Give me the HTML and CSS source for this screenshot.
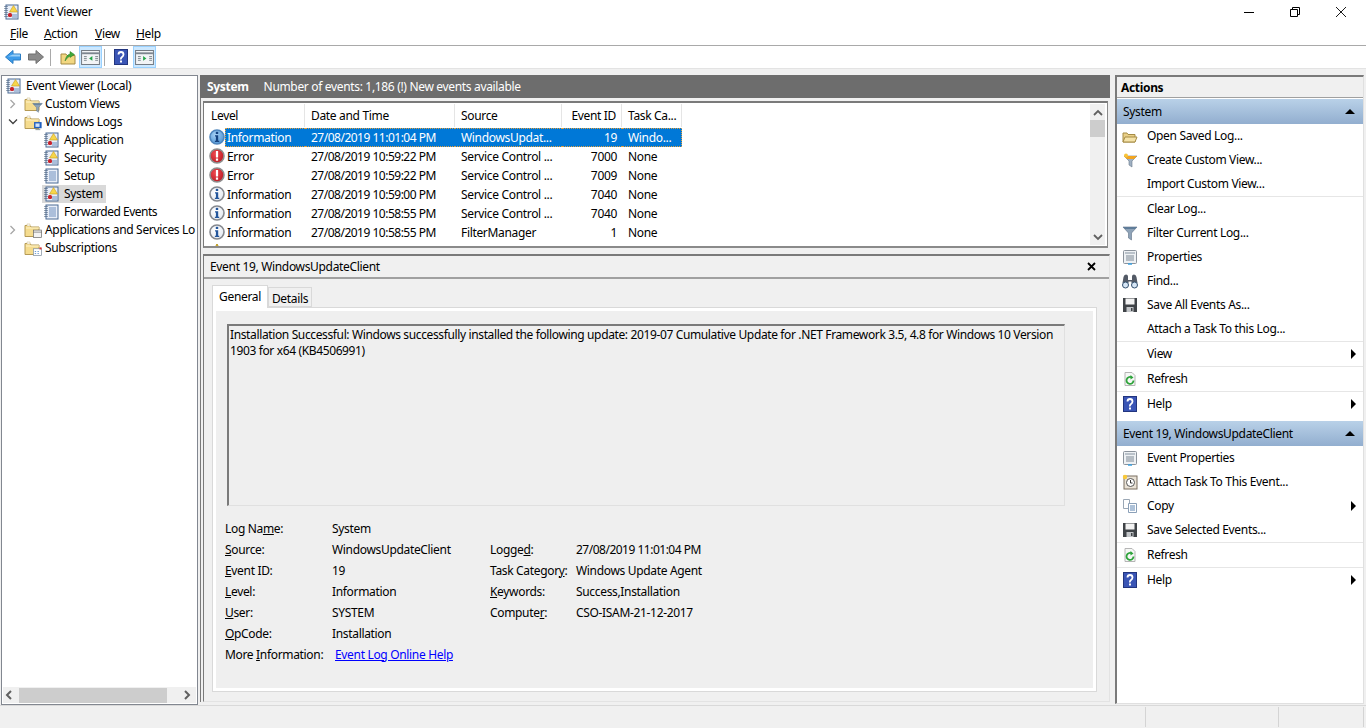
FILE: index.html
```html
<!DOCTYPE html>
<html lang="en">
<head>
<meta charset="utf-8">
<title>Event Viewer</title>
<link rel="stylesheet" href="styles.css">
</head>
<body>
<svg class="defs" width="0" height="0" aria-hidden="true">
  <defs>
    <radialGradient id="ginfo" cx=".4" cy=".35" r=".8"><stop offset="0" stop-color="#ffffff"/><stop offset="1" stop-color="#dfe5ee"/></radialGradient>
    <radialGradient id="gsel" cx=".4" cy=".35" r=".8"><stop offset="0" stop-color="#a8d2f5"/><stop offset="1" stop-color="#3f8ad0"/></radialGradient>
    <radialGradient id="gerr" cx=".4" cy=".35" r=".8"><stop offset="0" stop-color="#ee4a50"/><stop offset="1" stop-color="#b3121c"/></radialGradient>
    <symbol id="log" viewBox="0 0 16 16">
      <rect x="2" y="1" width="12" height="14" fill="#e8eef8" stroke="#4a6a94"/>
      <path d="M1 2v12M3 2v12" stroke="#39506e" stroke-dasharray="1 1"/>
      <path d="M5 4h7M5 6h7M5 8h7M5 10h7M5 12h7" stroke="#6f8fbd"/>
    </symbol>
    <symbol id="logwarn" viewBox="0 0 16 16">
      <rect x="2" y="1" width="12" height="14" fill="#e8eef8" stroke="#4a6a94"/>
      <path d="M1 2v12M3 2v12" stroke="#39506e" stroke-dasharray="1 1"/>
      <path d="M8 11h5M8 13h5" stroke="#6f8fbd"/>
      <path d="M9.5 1.5 13.5 8h-8z" fill="#f7d64a" stroke="#c79a1e" stroke-width=".6"/>
      <rect x="4" y="9" width="4" height="4" rx="1.5" fill="#c8232c"/>
    </symbol>
    <symbol id="folder" viewBox="0 0 16 16">
      <path d="M1 3.5h5l1 1.5h8v9.5H1z" fill="#f5dc8f" stroke="#b59a55"/>
      <path d="M2 6h13" stroke="#fff3c9"/>
      <path d="M3 2h3v2H3z" fill="#fff" stroke="#c9b57a" stroke-width=".5"/>
    </symbol>
    <symbol id="info" viewBox="0 0 16 16">
      <circle cx="8" cy="8" r="7" fill="url(#ginfo)" stroke="#85888e" stroke-width="1.6"/>
      <rect x="6.800" y="2.800" width="2.400" height="2.200" fill="#23569c"/>
      <path d="M6 6.300H9.200v5.400h1v1.300H5.900v-1.300h1V7.500H6z" fill="#23569c"/>
    </symbol>
    <symbol id="infosel" viewBox="0 0 16 16">
      <circle cx="8" cy="8" r="7" fill="url(#gsel)" stroke="#4f86bd" stroke-width="1.6"/>
      <rect x="6.800" y="2.800" width="2.400" height="2.200" fill="#14427f"/>
      <path d="M6 6.300H9.200v5.400h1v1.300H5.900v-1.300h1V7.500H6z" fill="#14427f"/>
    </symbol>
    <symbol id="error" viewBox="0 0 16 16">
      <circle cx="8" cy="8" r="7" fill="url(#gerr)" stroke="#8e8e8e" stroke-width="1.600"/>
      <rect x="6.900" y="3" width="2.200" height="6.500" fill="#fff"/>
      <rect x="6.900" y="10.500" width="2.200" height="2.200" fill="#fff"/>
    </symbol>
    <symbol id="help" viewBox="0 0 14 16">
      <rect x=".5" y=".5" width="13" height="15" fill="#3a55b5" stroke="#22357f"/>
      <path d="M4.500 5.500Q4.500 3 7 3t2.500 2.500Q9.500 7 8 8t-1 2.500" fill="none" stroke="#fff" stroke-width="1.800"/>
      <rect x="6" y="11.500" width="2" height="2" fill="#fff"/>
    </symbol>
    <symbol id="refresh" viewBox="0 0 16 16">
      <path d="M3 1.500h7l3 3v10H3z" fill="#f6f8f6" stroke="#b5b5b5"/>
      <path d="M11.500 9.500A3.500 3.500 0 1 1 9.500 6.300" fill="none" stroke="#2da33a" stroke-width="1.800"/>
      <path d="M8.500 4v4.500l3-2z" fill="#2da33a"/>
    </symbol>
    <symbol id="props" viewBox="0 0 16 16">
      <rect x="1.500" y="1.500" width="13" height="13" rx="1" fill="#eef1f4" stroke="#8b939c"/>
      <path d="M3 4h10" stroke="#a8b2bc" stroke-width="1.500"/>
      <path d="M4 7h8M4 9h8M4 11h8" stroke="#7c8894"/>
      <path d="M6 15h4" stroke="#3aa0e0" stroke-width="1.500"/>
    </symbol>
    <symbol id="save" viewBox="0 0 16 16">
      <path d="M1 1h14v14H1z" fill="#3f4347"/>
      <rect x="3.500" y="1.500" width="9" height="6" fill="#f3f3f3"/>
      <rect x="4.500" y="10" width="7" height="5" fill="#c3c6c9"/>
      <rect x="9" y="11" width="1.500" height="3" fill="#3f4347"/>
    </symbol>
    <symbol id="funnel" viewBox="0 0 16 16">
      <path d="M1 2h14l-5.500 6v7l-3-2V8z" fill="#8ea3b8" stroke="#5e7186" stroke-width=".6"/>
      <path d="M1 2h14l-2 2H3z" fill="#5f7c99"/>
    </symbol>
    <symbol id="funnelc" viewBox="0 0 16 16">
      <path d="M2 4h13l-5 5v6l-3-2V9z" fill="#9fb0c2" stroke="#69798a" stroke-width=".6"/>
      <path d="M2 4h13l-3 3H5z" fill="#f3a51f"/>
      <circle cx="4" cy="3.500" r="2" fill="#f8c43a"/>
    </symbol>
  </defs>
</svg>

<header class="titlebar">
  <svg class="ico16 title-ico"><use href="#logwarn"/></svg>
  <span class="title-text">Event Viewer</span>
  <div class="winctl">
    <svg class="wc" viewBox="0 0 10 10"><path d="M0 5.500h10" stroke="#000" fill="none"/></svg>
    <svg class="wc" viewBox="0 0 10 10"><path d="M.5 2.500h7v7h-7zM2.500 2.500v-2h7v7h-2" stroke="#000" fill="none"/></svg>
    <svg class="wc" viewBox="0 0 10 10"><path d="M0 0l10 10M10 0L0 10" stroke="#000" stroke-width=".9" fill="none"/></svg>
  </div>
</header>

<nav class="menubar">
  <span class="menu menu-file"><u>F</u>ile</span>
  <span class="menu menu-action"><u>A</u>ction</span>
  <span class="menu menu-view"><u>V</u>iew</span>
  <span class="menu menu-help"><u>H</u>elp</span>
</nav>

<div class="toolbar">
  <svg class="tb-arrow" viewBox="0 0 16 14"><path d="M8 .5v3.500h7.500v6H8v3.500L.5 7z" fill="#3d9be9" stroke="#2b7cc2"/><path d="M8 4.500h7v2H3z" fill="#9ad0f7"/></svg>
  <svg class="tb-arrow tb-fwd" viewBox="0 0 16 14"><path d="M8 .5v3.500H.5v6H8v3.500L15.500 7z" fill="#8a8a8a" stroke="#6f6f6f"/></svg>
  <i class="tb-sep tb-sep1"></i>
  <svg class="tb-up" viewBox="0 0 16 16"><path d="M1 5h5l1 1.500h8V15H1z" fill="#f2d781" stroke="#a58b45"/><path d="M5 12Q6 6 10 5V2.500L14.500 5.500 10 8.500V7Q7.500 8 5 12z" fill="#3ea83a" stroke="#2a7c28" stroke-width=".5"/></svg>
  <span class="tb-btn tb-btn1"><svg class="tb-pane" viewBox="0 0 20 16"><rect x=".5" y=".5" width="19" height="15" fill="#f2f4f6" stroke="#6d747c"/><path d="M1 3.500h18" stroke="#7c858e" stroke-width="2"/><path d="M3 7h3M3 9h3M3 11h3M15 7h3M15 9h3M15 11h3" stroke="#7c858e"/><path d="M12 6.500v5L8.500 9z" fill="#23a548"/></svg></span>
  <i class="tb-sep tb-sep2"></i>
  <svg class="tb-help"><use href="#help"/></svg>
  <span class="tb-btn tb-btn2"><svg class="tb-pane" viewBox="0 0 20 16"><rect x=".5" y=".5" width="19" height="15" fill="#f2f4f6" stroke="#6d747c"/><path d="M1 3.500h18" stroke="#7c858e" stroke-width="2"/><path d="M3 7h3M3 9h3M3 11h3M15 7h3M15 9h3M15 11h3" stroke="#7c858e"/><path d="M8.500 6.500v5L12 9z" fill="#23a548"/></svg></span>
</div>

<main class="main">
  <aside class="tree">
    <ul class="tree-list">
      <li class="node d0"><svg class="ico16"><use href="#logwarn"/></svg><span>Event Viewer (Local)</span></li>
      <li class="node d1"><svg class="chev" viewBox="0 0 8 10"><path d="M1.500 1l4 4-4 4" fill="none" stroke="#a6a6a6" stroke-width="1.300"/></svg><svg class="ico16"><use href="#folder"/></svg><svg class="badge"><use href="#funnel"/></svg><span>Custom Views</span></li>
      <li class="node d1"><svg class="chev chev-open" viewBox="0 0 10 8"><path d="M1 1.500l4 4 4-4" fill="none" stroke="#404040" stroke-width="1.300"/></svg><svg class="ico16"><use href="#folder"/></svg><svg class="badge" viewBox="0 0 16 16"><rect x="3" y="3" width="11" height="9" fill="#1f5fbf"/><rect x="5" y="5" width="6" height="5" fill="#cfe3fb"/><path d="M5 14h7" stroke="#566"/></svg><span>Windows Logs</span></li>
      <li class="node d2"><svg class="ico16"><use href="#logwarn"/></svg><span>Application</span></li>
      <li class="node d2"><svg class="ico16"><use href="#logwarn"/></svg><span>Security</span></li>
      <li class="node d2"><svg class="ico16"><use href="#log"/></svg><span>Setup</span></li>
      <li class="node d2 cur"><svg class="ico16"><use href="#logwarn"/></svg><span>System</span></li>
      <li class="node d2"><svg class="ico16"><use href="#log"/></svg><span class="tight">Forwarded Events</span></li>
      <li class="node d1"><svg class="chev" viewBox="0 0 8 10"><path d="M1.500 1l4 4-4 4" fill="none" stroke="#a6a6a6" stroke-width="1.300"/></svg><svg class="ico16"><use href="#folder"/></svg><svg class="badge" viewBox="0 0 16 16"><rect x="2" y="3" width="12" height="11" fill="#f3f3f3" stroke="#666"/><path d="M2 6h12" stroke="#666"/></svg><span>Applications and Services Lo</span></li>
      <li class="node d1 nochev"><svg class="ico16"><use href="#folder"/></svg><svg class="badge" viewBox="0 0 16 16"><rect x="2" y="4" width="12" height="10" fill="#fff" stroke="#7a8a9a"/><path d="M4 8h2M8 8h2M4 11h2M8 11h2" stroke="#2a6fc0"/><path d="M11 2h3v3h-3z" fill="#d33"/></svg><span>Subscriptions</span></li>
    </ul>
    <div class="hscroll">
      <svg class="sb-arrow" viewBox="0 0 8 10"><path d="M6 1L2 5l4 4" fill="none" stroke="#606060" stroke-width="2"/></svg>
      <div class="hthumb"></div>
      <svg class="sb-arrow" viewBox="0 0 8 10"><path d="M2 1l4 4-4 4" fill="none" stroke="#606060" stroke-width="2"/></svg>
    </div>
  </aside>

  <section class="center">
    <div class="band"><b>System</b><span>Number of events: 1,186 (!) New events available</span></div>
    <div class="stack">
      <div class="list sunken">
        <div class="list-body">
          <div class="row head">
            <span class="c-level">Level</span><span class="c-date">Date and Time</span><span class="c-src">Source</span><span class="c-id">Event ID</span><span class="c-task">Task Ca...</span>
          </div>
          <div class="row sel"><svg class="lv"><use href="#infosel"/></svg><span class="c-level hl">Information</span><span class="c-date hl">27/08/2019 11:01:04 PM</span><span class="c-src hl">WindowsUpdat...</span><span class="c-id hl">19</span><span class="c-task hl">Windo...</span></div>
          <div class="row"><svg class="lv"><use href="#error"/></svg><span class="c-level">Error</span><span class="c-date">27/08/2019 10:59:22 PM</span><span class="c-src">Service Control ...</span><span class="c-id">7000</span><span class="c-task">None</span></div>
          <div class="row"><svg class="lv"><use href="#error"/></svg><span class="c-level">Error</span><span class="c-date">27/08/2019 10:59:22 PM</span><span class="c-src">Service Control ...</span><span class="c-id">7009</span><span class="c-task">None</span></div>
          <div class="row"><svg class="lv"><use href="#info"/></svg><span class="c-level">Information</span><span class="c-date">27/08/2019 10:59:00 PM</span><span class="c-src">Service Control ...</span><span class="c-id">7040</span><span class="c-task">None</span></div>
          <div class="row"><svg class="lv"><use href="#info"/></svg><span class="c-level">Information</span><span class="c-date">27/08/2019 10:58:55 PM</span><span class="c-src">Service Control ...</span><span class="c-id">7040</span><span class="c-task">None</span></div>
          <div class="row"><svg class="lv"><use href="#info"/></svg><span class="c-level">Information</span><span class="c-date">27/08/2019 10:58:55 PM</span><span class="c-src">FilterManager</span><span class="c-id">1</span><span class="c-task">None</span></div>
          <div class="row stub"><svg class="lv" viewBox="0 0 16 16"><path d="M8 1l7 13H1z" fill="#f5cf3a" stroke="#b4921a"/></svg></div>
        </div>
        <div class="vscroll">
          <svg class="sb-up" viewBox="0 0 10 8"><path d="M1 6l4-4 4 4" fill="none" stroke="#606060" stroke-width="1.800"/></svg>
          <div class="vthumb"></div>
          <svg class="sb-up sb-down" viewBox="0 0 10 8"><path d="M1 2l4 4 4-4" fill="none" stroke="#606060" stroke-width="1.800"/></svg>
        </div>
      </div>

      <div class="detail sunken">
        <div class="detail-head"><span>Event 19, WindowsUpdateClient</span><svg class="close" viewBox="0 0 9 9"><path d="M1 1l7 7M8 1L1 8" stroke="#000" stroke-width="1.800"/></svg></div>
        <div class="tabs"><span class="tab on">General</span><span class="tab">Details</span></div>
        <div class="tabpanel">
          <div class="msg">Installation Successful: Windows successfully installed the following update: 2019-07 Cumulative Update for .NET Framework 3.5, 4.8 for Windows 10 Version 1903 for x64 (KB4506991)</div>
          <div class="fields">
            <span class="k">Log Na<u>m</u>e:</span><span class="v v-wide">System</span>
            <span class="k"><u>S</u>ource:</span><span class="v">WindowsUpdateClient</span><span class="k">Logge<u>d</u>:</span><span class="v num">27/08/2019 11:01:04 PM</span>
            <span class="k"><u>E</u>vent ID:</span><span class="v">19</span><span class="k">Task Categor<u>y</u>:</span><span class="v">Windows Update Agent</span>
            <span class="k"><u>L</u>evel:</span><span class="v">Information</span><span class="k"><u>K</u>eywords:</span><span class="v">Success,Installation</span>
            <span class="k"><u>U</u>ser:</span><span class="v">SYSTEM</span><span class="k">Compute<u>r</u>:</span><span class="v">CSO-ISAM-21-12-2017</span>
            <span class="k"><u>O</u>pCode:</span><span class="v v-wide">Installation</span>
            <span class="k">More <u>I</u>nformation:</span><span class="v v-wide v-link"><a href="#">Event Log Online Help</a></span>
          </div>
        </div>
      </div>
    </div>
  </section>

  <aside class="actions">
    <div class="act-title">Actions</div>
    <div class="group"><span>System</span><i class="tri"></i></div>
    <ul class="act-list">
      <li class="act"><svg class="ico16" viewBox="0 0 16 16"><path d="M1 5h4l1 1.500h7V14H1z" fill="#e9cf87" stroke="#a58b45"/><path d="M1 14l2-5h12l-2 5z" fill="#f4e2a8" stroke="#a58b45"/></svg>Open Saved Log...</li>
      <li class="act"><svg class="ico16"><use href="#funnelc"/></svg>Create Custom View...</li>
      <li class="act sepb"><i class="ico16"></i>Import Custom View...</li>
      <li class="act"><i class="ico16"></i>Clear Log...</li>
      <li class="act"><svg class="ico16"><use href="#funnel"/></svg>Filter Current Log...</li>
      <li class="act"><svg class="ico16"><use href="#props"/></svg>Properties</li>
      <li class="act"><svg class="ico16" viewBox="0 0 16 16"><path d="M1.500 4Q2 1.500 4 1.500t2 2V7h4V3.500q0-2 2-2t2.500 2.500L15.500 10h-6V8.500h-3V10H.5z" fill="#535a66"/><circle cx="3.500" cy="12" r="3" fill="#d6e6f6" stroke="#33506e"/><circle cx="12.500" cy="12" r="3" fill="#d6e6f6" stroke="#33506e"/></svg>Find...</li>
      <li class="act"><svg class="ico16"><use href="#save"/></svg>Save All Events As...</li>
      <li class="act sepb"><i class="ico16"></i>Attach a Task To this Log...</li>
      <li class="act sepb"><i class="ico16"></i>View<i class="sub"></i></li>
      <li class="act sepb"><svg class="ico16"><use href="#refresh"/></svg>Refresh</li>
      <li class="act"><svg class="ico16"><use href="#help"/></svg>Help<i class="sub"></i></li>
    </ul>
    <div class="group g2"><span>Event 19, WindowsUpdateClient</span><i class="tri"></i></div>
    <ul class="act-list">
      <li class="act"><svg class="ico16"><use href="#props"/></svg>Event Properties</li>
      <li class="act"><svg class="ico16" viewBox="0 0 16 16"><rect x="2" y="2" width="13" height="13" fill="#e9e2d6" stroke="#7a6f60"/><circle cx="8.500" cy="8.500" r="4" fill="#fff" stroke="#555"/><path d="M8.500 6v3h2" fill="none" stroke="#333"/><circle cx="3" cy="3" r="2.200" fill="#f9c93a"/></svg>Attach Task To This Event...</li>
      <li class="act"><svg class="ico16" viewBox="0 0 16 16"><path d="M1.500 1.500h6v9h-6z" fill="#fff" stroke="#9aa7b5"/><path d="M6.500 5.500h8v9h-8z" fill="#fff" stroke="#8ba0b8"/><path d="M8 8h5M8 10h5M8 12h5" stroke="#5f86b3"/></svg>Copy<i class="sub"></i></li>
      <li class="act sepb"><svg class="ico16"><use href="#save"/></svg>Save Selected Events...</li>
      <li class="act sepb"><svg class="ico16"><use href="#refresh"/></svg>Refresh</li>
      <li class="act"><svg class="ico16"><use href="#help"/></svg>Help<i class="sub"></i></li>
    </ul>
  </aside>
</main>

<footer class="status"><i class="cell c1"></i><i class="cell c2"></i><i class="cell c3"></i></footer>
</body>
</html>
```

FILE: styles.css
```css
* { box-sizing: border-box; }
html, body { margin: 0; padding: 0; }
body {
  width: 1366px; height: 728px; overflow: hidden;
  display: flex; flex-direction: column;
  background: #f0f0f0; color: #000;
  font: 12px/16px "Noto Sans", "Open Sans", sans-serif;
  letter-spacing: -0.33px;
}
ul { list-style: none; margin: 0; padding: 0; }
i { display: block; }
u { text-underline-offset: 1px; }
.defs { position: absolute; }
.ico16 { width: 16px; height: 16px; flex: none; display: block; }

.titlebar { height: 23px; background: #fff; display: flex; align-items: center; padding-left: 4px; }
.title-ico { margin-right: 4px; }
.title-text { flex: 1; padding-top: 1px; }
.winctl { display: flex; padding-right: 20px; gap: 36px; }
.wc { width: 10px; height: 10px; }

.menubar { height: 23px; background: #fff; border-bottom: 1px solid #a9a9a9; display: flex; align-items: center; padding-left: 10px; }
.menu-file { width: 34px; } .menu-action { width: 51px; } .menu-view { width: 41px; }

.toolbar { height: 23px; background: #fff; border-bottom: 1px solid #e3e3e3; display: flex; align-items: center; padding-left: 5px; }
.tb-arrow { width: 16px; height: 14px; }
.tb-fwd { margin-left: 7px; }
.tb-sep { width: 1px; height: 17px; background: #a9a9a9; }
.tb-sep1 { margin: 0 9px 0 6px; }
.tb-sep2 { margin: 0 9px 0 2px; }
.tb-up { width: 16px; height: 16px; margin-right: 3px; }
.tb-btn { width: 23px; height: 22px; background: #cce8ff; border: 1px solid #99d1ff; display: flex; align-items: center; justify-content: center; }
.tb-pane { width: 19px; height: 15px; }
.tb-help { width: 14px; height: 16px; margin-right: 5px; }

.main { height: 636px; display: grid; grid-template-columns: 197px 917px 249px; padding: 6px 0 0 1px; align-items: start; }

.tree { height: 630px; background: #fff; border: 1px solid #828790; display: flex; flex-direction: column; }
.tree-list { flex: 1; padding-top: 1px; overflow: hidden; }
.node { height: 18px; display: flex; align-items: center; white-space: nowrap; position: relative; }
.node .ico16 { margin-right: 4px; }
.d0 { padding-left: 4px; }
.d1 { padding-left: 7px; }
.d1 .ico16 { margin-right: 5px; }
.d1 .chev { margin-right: 7px; }
.nochev { padding-left: 22px; }
.d2 { padding-left: 42px; }
.chev { width: 8px; height: 10px; flex: none; }
.d1 .chev-open { width: 10px; height: 8px; margin-right: 6px; margin-left: -1px; }
.badge { position: absolute; width: 11px; height: 11px; left: 30px; top: 7px; }
.d2.cur { margin-left: 40px; padding-left: 2px; width: 64px; background: #d9d9d9; }
.tight { letter-spacing: -0.5px; }
.hscroll { height: 16px; margin: 0 1px 1px; background: #f0f0f0; display: flex; align-items: center; }
.hthumb { width: 148px; height: 15px; background: #cdcdcd; margin: 0 auto 0 6px; }
.sb-arrow { width: 8px; height: 10px; flex: none; }
.hscroll .sb-arrow:first-child { margin: 0 0 0 2px; }
.hscroll .sb-arrow:last-child { margin: 0 5px 0 0; }

.center { padding: 0 5px 0 2px; height: 627px; display: flex; flex-direction: column; }
.band { height: 23px; background: #6d6d6d; color: #fff; display: flex; align-items: center; padding-left: 7px; gap: 15px; }
.band b { font-weight: 700; }
.stack { flex: 1; display: flex; flex-direction: column; border-left: 1px solid #7a7a7a; padding-top: 3px; }
.sunken { border-top: 2px solid #7a7a7a; border-left: 1px solid #7a7a7a; border-right: 1px solid #8a8a8a; border-bottom: 2px solid #8a8a8a; background: #fff; }
.list { margin: 0 2px 0 2px; height: 147px; display: flex; }
.list-body { flex: 1; overflow: hidden; padding-top: 1px; }
.row { height: 19px; display: grid; grid-template-columns: 100px 150px 107px 60px 60px; width: 477px; align-items: center; position: relative; margin-left: 1px; white-space: nowrap; }
.row > span { padding-left: 6px; }
.row > .c-level { padding-left: 22px; }
.row > .c-id { padding: 0 5px 0 0; text-align: right; }
.row > .c-date, .num { letter-spacing: -0.5px; }
.head { height: 24px; }
.head > span { height: 23px; line-height: 23px; border-right: 1px solid #e5e5e5; align-self: start; }
.row.head > .c-level { padding-left: 6px; }
.row.head > .c-date { letter-spacing: -0.33px; }
.lv { position: absolute; left: 4px; top: 1px; width: 16px; height: 16px; }
.sel .hl { background: #0078d7; color: #fff; height: 19px; line-height: 17px; border-top: 1px dotted #e0a040; border-bottom: 1px dotted #e0a040; }
.sel .c-task { border-right: 1px dotted #e0a040; }
.row.sel > .c-level { margin-left: 20px; padding-left: 1px; border-left: 1px dotted #e0a040; }
.stub { height: 5px; overflow: hidden; }
.vscroll { width: 15px; margin: 1px 2px 1px 0; background: #f0f0f0; display: flex; flex-direction: column; align-items: center; }
.sb-up { width: 10px; height: 8px; margin-top: 5px; flex: none; }
.sb-down { margin: auto 0 4px; }
.vthumb { width: 15px; height: 17px; background: #cdcdcd; margin-top: 3px; }

.detail { margin: 6px 0 0 2px; flex: 1; background: #f0f0f0; border-right: 1px solid #e3e3e3; border-bottom: 1px solid #e3e3e3; }
.detail-head { height: 23px; display: flex; align-items: center; justify-content: space-between; padding: 0 13px 0 6px; border-bottom: 2px solid #a0a0a0; }
.close { width: 9px; height: 9px; }
.tabs { display: flex; align-items: flex-end; height: 28px; margin-left: 8px; }
.tab { width: 44px; height: 20px; text-align: center; border: 1px solid #d9d9d9; line-height: 21px; }
.tab.on { width: 56px; height: 23px; background: #fff; border-bottom: 0; margin-bottom: -1px; line-height: 21px; position: relative; }
.tabpanel { margin-left: 8px; width: 885px; height: 385px; background: #efefef; border: 1px solid #d9d9d9; box-shadow: inset 0 0 0 3px #fff; padding: 16px 31px 0 14px; }
.msg { height: 182px; border-top: 2px solid #7a7a7a; border-left: 2px solid #7a7a7a; border-right: 1px solid #e0e0e0; border-bottom: 1px solid #e0e0e0; padding: 1px 4px 0 1px; letter-spacing: -0.37px; }
.fields { display: grid; grid-template-columns: 107px 158px 86px 1fr; grid-auto-rows: 21px; margin: 12px 0 0 -2px; align-items: center; }
.v-wide { grid-column: span 3; }
.v-link { padding-left: 3px; }
a { color: #0000ff; }

.actions { height: 629px; background: #fff; border-left: 2px solid #7a7a7a; border-top: 2px solid #7a7a7a; border-bottom: 1px solid #e0e0e0; border-right: 1px solid #e0e0e0; }
.act-title { height: 21px; background: #f0f0f0; font-weight: 700; padding: 1px 0 0 4px; line-height: 20px; border-bottom: 1px solid #a0a0a0; }
.group { height: 25px; margin-top: 1px; padding: 0 7px 0 6px; display: flex; align-items: center; justify-content: space-between; background: linear-gradient(#b9d1e8, #92aecf); }
.g2 { margin-top: 5px; }
.tri { width: 0; height: 0; border: 5px solid transparent; border-top: 0; border-bottom: 5px solid #000; margin-right: 1px; }
.act { height: 24px; display: flex; align-items: center; padding-left: 5px; position: relative; }
.act .ico16 { margin-right: 9px; }
.sepb { height: 25px; border-bottom: 1px solid #e6e6e6; padding-bottom: 1px; }
.sub { position: absolute; right: 7px; top: 7px; width: 0; height: 0; border: 5px solid transparent; border-right: 0; border-left: 5px solid #000; }

.status { flex: 1; border-top: 1px solid #d9d9d9; display: flex; padding-top: 1px; padding-left: 1145px; }
.cell { height: 20px; border-left: 1px solid #d4d4d4; }
.c1 { width: 133px; } .c2 { width: 85px; } .c3 { width: 2px; }
```
